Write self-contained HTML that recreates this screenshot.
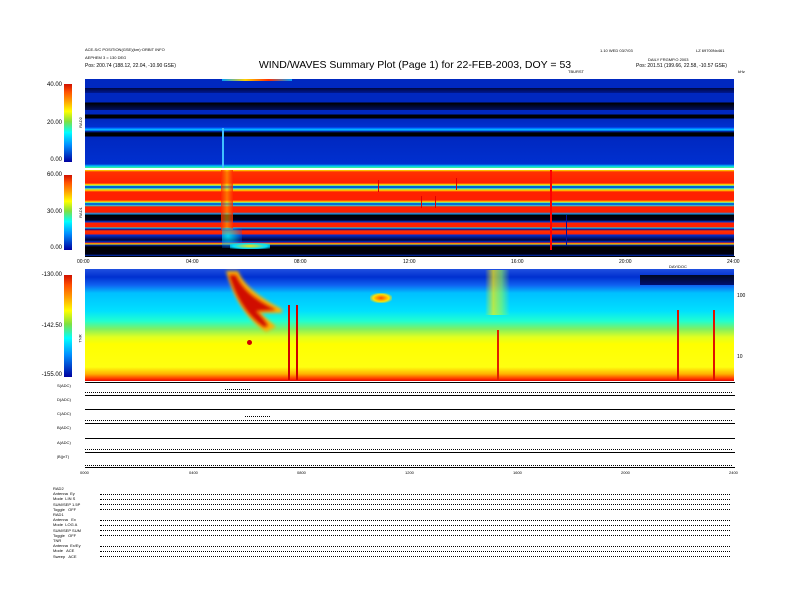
<!DOCTYPE html>
<html><head><meta charset="utf-8"><style>
body{margin:0;background:#fff;width:792px;height:612px;position:relative;overflow:hidden;font-family:"Liberation Sans",sans-serif}
.a{position:absolute}
.t{position:absolute;font-size:5px;color:#000;white-space:nowrap}
.cb{position:absolute;left:64px;width:8px;background:linear-gradient(to bottom,#d01000,#ff5000 10%,#ffa000 22%,#ffff00 35%,#80e040 48%,#00ffff 62%,#0090ff 78%,#0000a0)}
.ylab{position:absolute;font-size:6px;right:730px;text-align:right}
.row{position:absolute;left:85px;width:650px;border-top:1px solid #000}
.dots{position:absolute;left:85px;width:647px;border-top:1px dotted #000}
</style></head><body>
<div class="t" style="left:85px;top:47px;font-size:4px">ACE-S/C POSITION(GSE)(km)·ORBIT INFO</div>
<div class="t" style="left:85px;top:55px;font-size:4px">AEPHEM 3 = 130 DEG</div>
<div class="t" style="left:85px;top:63px;font-size:5px">Pos: 200.74 (188.12, 22.04, -10.90 GSE)</div>
<div class="t" style="left:600px;top:48px;font-size:4px">1.10 WED 03/7/03</div>
<div class="t" style="left:696px;top:48px;font-size:4px">LZ 69700Nx461</div>
<div class="t" style="left:648px;top:57px;font-size:4px">DAILY FRGMP.O 2003</div>
<div class="t" style="left:636px;top:63px;font-size:5px">Pos: 201.51 (199.66, 22.58, -10.57 GSE)</div>
<div class="a" style="left:230px;top:59px;width:370px;text-align:center;font-size:10.5px">WIND/WAVES Summary Plot (Page 1) for 22-FEB-2003, DOY = 53</div>
<div class="t" style="left:568px;top:69px;font-size:4px">TBURST</div>
<div class="t" style="left:738px;top:69px;font-size:4px">kHz</div>

<!-- Panel RAD2 -->
<div class="a" style="left:85px;top:79px;width:649px;height:89px;background:
linear-gradient(to bottom,#0028c0 0,#0028c0 9px,#000840 9px,#001890 14px,#0028c0 14px,#0028c0 23px,#000 24px,#001060 31px,#0028c0 31px,#0028c0 35px,#000 36px,#000 39px,#0028c0 40px,#0030d0 48px,#0060ff 49px,#00d0ff 51px,#0030d0 52px,#000 54px,#000 57px,#0028c0 58px,#0030d0 85px,#00c0ff 87px,#40ff80 89px)"></div>
<div class="a" style="left:222px;top:79px;width:70px;height:2px;background:linear-gradient(to right,#00a0ff,#ffd000,#ff3000,#00a0ff)"></div>
<div class="a" style="left:222px;top:128px;width:2px;height:40px;background:#40c0ff"></div>
<div class="cb" style="top:84px;height:78px"></div>
<div class="ylab" style="top:82px">40.00</div><div class="ylab" style="top:120px">20.00</div><div class="ylab" style="top:157px">0.00</div>
<div class="t" style="left:75px;top:120px;font-size:4px;transform:rotate(-90deg)">RAD2</div>

<!-- Panel RAD1 -->
<div class="a" style="left:85px;top:170px;width:649px;height:86px;background:
linear-gradient(to bottom,#ffe000 0,#ff3000 2px,#ff2000 13px,#ffff00 15px,#00c0ff 16px,#0000b0 17px,#00c0ff 18px,#ffe000 20px,#ff2000 22px,#ff2000 30px,#ffe000 32px,#00e0ff 33px,#0000b0 34px,#00e0ff 35px,#ff2000 37px,#ff2000 42px,#00a0ff 44px,#000 45px,#000020 50px,#0040e0 52px,#ff2000 53px,#ff2000 57px,#00e0ff 58px,#0000a0 59px,#ff3000 61px,#ff2000 64px,#0030d0 65px,#000030 70px,#0030d0 72px,#ff2000 73px,#ffff00 74px,#0020a0 75px,#000 77px,#000010 84px,#0030c0 86px)"></div>
<div class="a" style="left:221px;top:170px;width:12px;height:60px;background:linear-gradient(to right,rgba(255,40,0,.8),rgba(255,200,0,.5),rgba(255,40,0,.8))"></div>
<div class="a" style="left:222px;top:228px;width:20px;height:20px;background:radial-gradient(ellipse at 30% 40%,rgba(0,255,255,.8),rgba(0,100,255,.3) 70%,transparent)"></div>
<div class="a" style="left:230px;top:243px;width:40px;height:6px;background:radial-gradient(ellipse,#ffe000,#00e0ff 60%,transparent)"></div>
<div class="a" style="left:550px;top:170px;width:2px;height:80px;background:#ff0000"></div>
<div class="a" style="left:378px;top:180px;width:1px;height:12px;background:#e00000"></div>
<div class="a" style="left:456px;top:178px;width:1px;height:12px;background:#e00000"></div>
<div class="a" style="left:421px;top:196px;width:1px;height:12px;background:#e00000"></div>
<div class="a" style="left:435px;top:196px;width:1px;height:12px;background:#e00000"></div>
<div class="a" style="left:566px;top:215px;width:1px;height:30px;background:#0010a0"></div>
<div class="cb" style="top:175px;height:75px"></div>
<div class="ylab" style="top:172px">60.00</div><div class="ylab" style="top:209px">30.00</div><div class="ylab" style="top:245px">0.00</div>
<div class="t" style="left:75px;top:210px;font-size:4px;transform:rotate(-90deg)">RAD1</div>
<div class="a" style="left:85px;top:256px;width:650px;border-top:1px solid #000"></div>
<div class="t" style="left:77px;top:259px">00:00</div><div class="t" style="left:186px;top:259px">04:00</div><div class="t" style="left:294px;top:259px">08:00</div><div class="t" style="left:403px;top:259px">12:00</div><div class="t" style="left:511px;top:259px">16:00</div><div class="t" style="left:619px;top:259px">20:00</div><div class="t" style="left:727px;top:259px">24:00</div>
<div class="t" style="left:669px;top:264px;font-size:4px">DAY/DOC</div>

<!-- Panel TNR -->
<div class="a" style="left:85px;top:269px;width:649px;height:112px;background:
linear-gradient(to bottom,#2050e0 0,#0030d0 8px,#1060f0 16px,#00c0ff 24px,#00e0ff 42px,#20ffd0 52px,#80f060 60px,#e0ff20 68px,#ffff00 75px,#ffff10 98px,#ffb000 105px,#ff3000 110px,#e00000 112px)"></div>
<div class="a" style="left:640px;top:275px;width:94px;height:10px;background:linear-gradient(to bottom,#000820,#001070)"></div>
<svg class="a" style="left:220px;top:269px" width="80" height="70"><defs><filter id="b"><feGaussianBlur stdDeviation="1.5"/></filter></defs>
<path d="M6 2 L18 2 Q26 22 62 40 L62 44 L40 44 Q50 52 56 58 L46 63 Q18 45 6 2Z" fill="#ffb000" filter="url(#b)"/>
<path d="M9 6 L16 6 Q24 26 56 41 L36 42 Q44 50 48 57 L44 58 Q20 42 9 6Z" fill="#d01000" filter="url(#b)"/></svg>
<div class="a" style="left:370px;top:293px;width:22px;height:10px;background:radial-gradient(ellipse,#ff5000,#ffe000 50%,rgba(0,255,255,0) 80%)"></div>
<div class="a" style="left:485px;top:270px;width:25px;height:45px;background:linear-gradient(to right,rgba(255,255,0,0),rgba(255,240,0,.7),rgba(150,255,80,.6),rgba(255,255,0,0))"></div>
<div class="a" style="left:288px;top:305px;width:2px;height:75px;background:#d00000"></div>
<div class="a" style="left:296px;top:305px;width:2px;height:75px;background:#d00000"></div>
<div class="a" style="left:497px;top:330px;width:2px;height:50px;background:#e02000"></div>
<div class="a" style="left:677px;top:310px;width:2px;height:70px;background:#e01000"></div>
<div class="a" style="left:713px;top:310px;width:2px;height:70px;background:#e01000"></div>
<div class="a" style="left:247px;top:340px;width:5px;height:5px;border-radius:50%;background:#d00000"></div>
<div class="cb" style="top:275px;height:102px"></div>
<div class="ylab" style="top:272px">-130.00</div><div class="ylab" style="top:323px">-142.50</div><div class="ylab" style="top:372px">-155.00</div>
<div class="t" style="left:76px;top:336px;font-size:4px;transform:rotate(-90deg)">TNR</div>
<div class="t" style="left:737px;top:293px">100</div><div class="t" style="left:737px;top:354px">10</div>

<!-- line plots -->
<div class="row" style="top:382px"></div>
<div class="row" style="top:395px"></div>
<div class="row" style="top:409px"></div>
<div class="row" style="top:423px"></div>
<div class="row" style="top:438px"></div>
<div class="row" style="top:452px"></div>
<div class="row" style="top:467px"></div>
<div class="dots" style="top:392px"></div>
<div class="dots" style="top:420px"></div>
<div class="dots" style="top:449px"></div>
<div class="dots" style="top:465px"></div>
<div class="a" style="left:225px;top:389px;width:25px;border-top:1px dotted #000"></div>
<div class="a" style="left:245px;top:416px;width:25px;border-top:1px dotted #000"></div>
<div class="t" style="left:57px;top:383px;font-size:4px">S(ADC)</div>
<div class="t" style="left:57px;top:397px;font-size:4px">D(ADC)</div>
<div class="t" style="left:57px;top:411px;font-size:4px">C(ADC)</div>
<div class="t" style="left:57px;top:425px;font-size:4px">B(ADC)</div>
<div class="t" style="left:57px;top:440px;font-size:4px">A(ADC)</div>
<div class="t" style="left:57px;top:454px;font-size:4px">|B|(nT)</div>
<div class="t" style="left:80px;top:470px;font-size:4px">0000</div><div class="t" style="left:189px;top:470px;font-size:4px">0400</div><div class="t" style="left:297px;top:470px;font-size:4px">0800</div><div class="t" style="left:405px;top:470px;font-size:4px">1200</div><div class="t" style="left:513px;top:470px;font-size:4px">1600</div><div class="t" style="left:621px;top:470px;font-size:4px">2000</div><div class="t" style="left:729px;top:470px;font-size:4px">2400</div>

<!-- bottom text -->
<div class="a" style="left:53px;top:486px;font-size:4px;line-height:5.2px;white-space:pre">RAD2
Antenna  Ey
Mode  LIN S
SUM/SEP 1.5P
Toggle   OFF
RAD1
Antenna   Ex
Mode  LOG A
SUM/SEP SUM
Toggle   OFF
TNR
Antenna  Ex/Ey
Mode   ACE
Sweep   ACE</div>
<div class="dots" style="left:100px;width:630px;top:494px"></div>
<div class="dots" style="left:100px;width:630px;top:499px"></div>
<div class="dots" style="left:100px;width:630px;top:504px"></div>
<div class="dots" style="left:100px;width:630px;top:509px"></div>
<div class="dots" style="left:100px;width:630px;top:520px"></div>
<div class="dots" style="left:100px;width:630px;top:525px"></div>
<div class="dots" style="left:100px;width:630px;top:530px"></div>
<div class="dots" style="left:100px;width:630px;top:535px"></div>
<div class="dots" style="left:100px;width:630px;top:546px"></div>
<div class="dots" style="left:100px;width:630px;top:551px"></div>
<div class="dots" style="left:100px;width:630px;top:556px"></div>
</body></html>
